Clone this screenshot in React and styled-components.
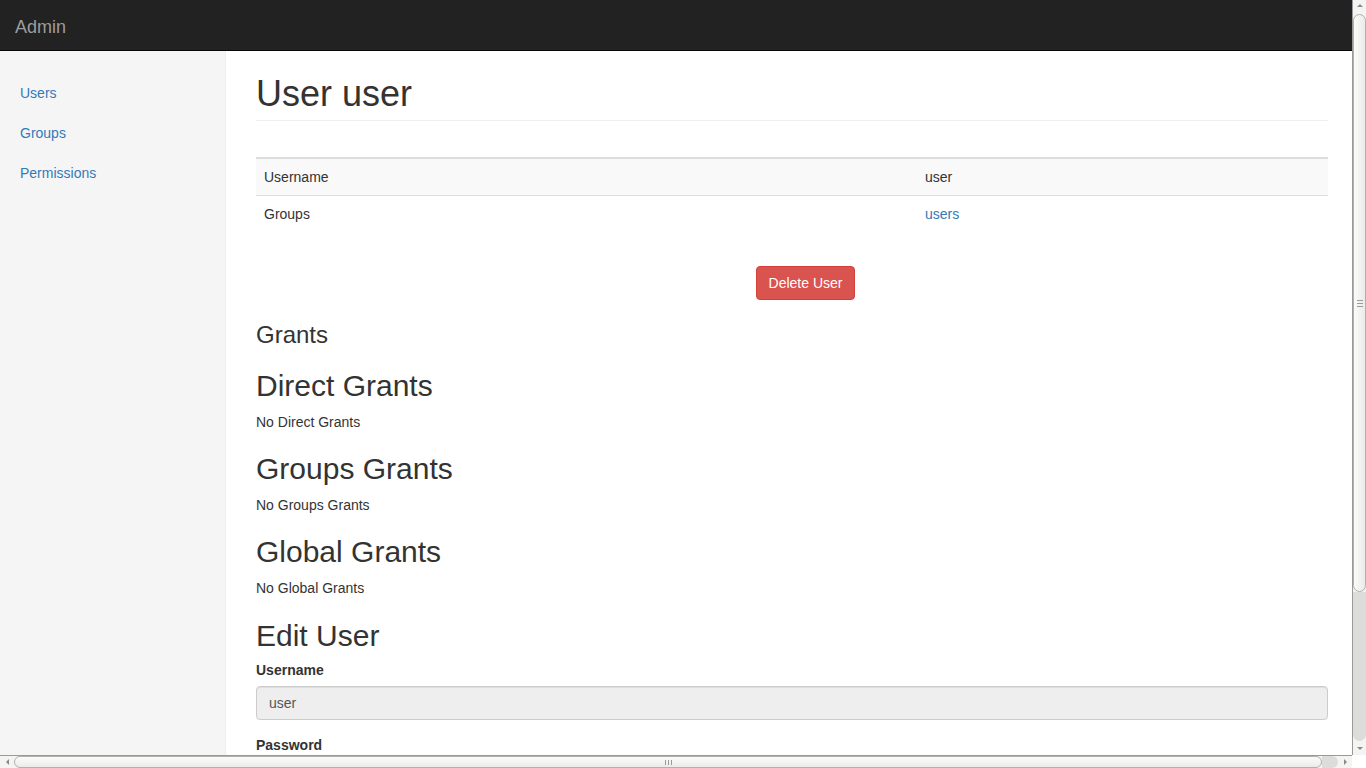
import React from "react";
import styled, { createGlobalStyle } from "styled-components";

const GlobalStyle = createGlobalStyle`
  html, body {
    margin: 0;
    padding: 0;
    overflow: hidden;
  }
  body {
    font-family: "Liberation Sans", Arial, Helvetica, sans-serif;
    font-size: 14px;
    line-height: 1.42857;
    color: #333;
    background: #fff;
  }
  * {
    box-sizing: border-box;
  }
`;

/* browser frame: page + the two scrollbars seen in the screenshot */
const Window = styled.div`
  display: grid;
  grid-template-columns: 1fr 14px;
  grid-template-rows: 1fr 13px;
  width: 100vw;
  height: 100vh;
`;

const Viewport = styled.div`
  overflow: hidden;
  display: flex;
  flex-direction: column;
`;

const VScroll = styled.div`
  display: flex;
  flex-direction: column;
  background: #f4f4f2;
  border-left: 1px solid #9a9a9a;
`;

const HScroll = styled.div`
  display: flex;
  background: #f4f4f2;
  border-top: 1px solid #9a9a9a;
`;

const Corner = styled.div`
  background: #fff;
`;

const Arrow = styled.div`
  flex: 0 0 ${(p) => p.$size || 14}px;
  display: flex;
  align-items: center;
  justify-content: center;
  background: #f4f4f2;

  &::after {
    content: "";
    width: 0;
    height: 0;
    border: 3px solid transparent;
    ${(p) => p.$dir === "up" && "border-bottom-color: #8a8a8a; border-top-width: 0; margin-bottom: 3px;"}
    ${(p) => p.$dir === "down" && "border-top-color: #8a8a8a; border-bottom-width: 0;"}
    ${(p) => p.$dir === "left" && "border-right-color: #8a8a8a; border-left-width: 0;"}
    ${(p) => p.$dir === "right" && "border-left-color: #8a8a8a; border-right-width: 0;"}
  }
`;

const Thumb = styled.div`
  flex: 0 0 ${(p) => p.$length}px;
  display: flex;
  flex-direction: ${(p) => (p.$vertical ? "column" : "row")};
  align-items: center;
  justify-content: center;
  gap: 2px;
  background: linear-gradient(
    ${(p) => (p.$vertical ? "to right" : "to bottom")},
    #fbfbfa,
    #ebebe9
  );
  border: 1px solid #b0b0ae;
  border-radius: 7px;
`;

const Grip = styled.span`
  background: #9a9a9a;
  width: ${(p) => (p.$vertical ? "6px" : "1px")};
  height: ${(p) => (p.$vertical ? "1px" : "5px")};
`;

const Trough = styled.div`
  flex: 1;
  background: #dcdcda;
  border-radius: 0 0 7px 7px;
`;

const HTrough = styled.div`
  flex: 1;
  background: #dcdcda;
  border-radius: 0 7px 7px 0;
`;

const NavBar = styled.div`
  flex: 0 0 51px;
  background: #222;
  border-bottom: 1px solid #080808;
  display: flex;
  align-items: center;
  padding: 4px 15px 0;
`;

const Brand = styled.a`
  color: #9d9d9d;
  font-size: 18px;
  line-height: 20px;
  text-decoration: none;
`;

const Body = styled.div`
  flex: 1;
  display: flex;
  min-height: 0;
`;

const Sidebar = styled.div`
  width: 226px;
  flex-shrink: 0;
  background: #f5f5f5;
  border-right: 1px solid #eee;
  padding-top: 22px;
`;

const SideLink = styled.a`
  display: block;
  padding: 10px 20px;
  color: #337ab7;
  text-decoration: none;
  font-size: 14px;
  line-height: 20px;
`;

const Main = styled.div`
  flex: 1;
  padding: 23px 24px 40px 30px;
`;

const PageHeader = styled.div`
  border-bottom: 1px solid #eee;
  padding-bottom: 6px;
  margin-bottom: 36px;
`;

const Title = styled.h1`
  margin: 0;
  font-size: 36px;
  font-weight: 500;
  line-height: 1.1;
`;

const Table = styled.table`
  width: 100%;
  border-collapse: collapse;
  border-top: 2px solid #ddd;
  margin-bottom: 34px;
`;

const Row = styled.tr`
  background: ${(p) => (p.$striped ? "#f9f9f9" : "transparent")};
  border-bottom: ${(p) => (p.$striped ? "1px solid #ddd" : "none")};
`;

const Cell = styled.td`
  padding: 8px;
  line-height: 20px;
  vertical-align: top;
  width: ${(p) => p.$width || "auto"};
`;

const Link = styled.a`
  color: #337ab7;
  text-decoration: none;
`;

const ButtonRow = styled.div`
  display: flex;
  justify-content: center;
  padding-left: 27px;
  margin-bottom: 22px;
`;

const DangerButton = styled.button`
  font-family: inherit;
  font-size: 14px;
  line-height: 20px;
  padding: 6px 12px;
  color: #fff;
  background: #d9534f;
  border: 1px solid #d43f3a;
  border-radius: 4px;
  cursor: pointer;
`;

const SectionTitle = styled.h3`
  margin: 0 0 21px;
  font-size: 24px;
  font-weight: 500;
  line-height: 1.1;
`;

const SubTitle = styled.h2`
  margin: ${(p) => p.$top}px 0 ${(p) => p.$bottom}px;
  font-size: 30px;
  font-weight: 500;
  line-height: 1.1;
`;

const Empty = styled.div`
  line-height: 20px;
`;

const FormGroup = styled.div`
  margin-bottom: 15px;
`;

const Label = styled.label`
  display: block;
  font-weight: 700;
  margin-bottom: 6px;
  line-height: 20px;
`;

const Input = styled.input`
  display: block;
  width: 100%;
  height: 34px;
  padding: 6px 12px;
  font-family: inherit;
  font-size: 14px;
  color: #555;
  background: ${(p) => (p.disabled ? "#eee" : "#fff")};
  border: 1px solid #ccc;
  border-radius: 4px;
  box-shadow: inset 0 1px 1px rgba(0, 0, 0, 0.075);
`;

const grants = [
  ["Direct Grants", "No Direct Grants"],
  ["Groups Grants", "No Groups Grants"],
  ["Global Grants", "No Global Grants"],
];

export default function App() {
  return (
    <>
      <GlobalStyle />
      <Window>
        <Viewport>
          <NavBar>
            <Brand href="#">Admin</Brand>
          </NavBar>
          <Body>
            <Sidebar>
              <SideLink href="#">Users</SideLink>
              <SideLink href="#">Groups</SideLink>
              <SideLink href="#">Permissions</SideLink>
            </Sidebar>
            <Main>
              <PageHeader>
                <Title>User user</Title>
              </PageHeader>
              <Table>
                <tbody>
                  <Row $striped>
                    <Cell $width="661px">Username</Cell>
                    <Cell>user</Cell>
                  </Row>
                  <Row>
                    <Cell>Groups</Cell>
                    <Cell>
                      <Link href="#">users</Link>
                    </Cell>
                  </Row>
                </tbody>
              </Table>
              <ButtonRow>
                <DangerButton>Delete User</DangerButton>
              </ButtonRow>
              <SectionTitle>Grants</SectionTitle>
              {grants.map(([title, text], i) => (
                <div key={title}>
                  <SubTitle $top={i === 0 ? 0 : 20} $bottom={10}>
                    {title}
                  </SubTitle>
                  <Empty>{text}</Empty>
                </div>
              ))}
              <SubTitle $top={21} $bottom={8}>
                Edit User
              </SubTitle>
              <FormGroup>
                <Label>Username</Label>
                <Input disabled value="user" readOnly />
              </FormGroup>
              <FormGroup>
                <Label>Password</Label>
                <Input type="password" />
              </FormGroup>
            </Main>
          </Body>
        </Viewport>
        <VScroll>
          <Arrow $dir="up" />
          <Thumb $vertical $length={578}>
            <Grip $vertical />
            <Grip $vertical />
            <Grip $vertical />
          </Thumb>
          <Trough />
          <Arrow $dir="down" />
        </VScroll>
        <HScroll>
          <Arrow $dir="left" />
          <Thumb $length={1308}>
            <Grip />
            <Grip />
            <Grip />
          </Thumb>
          <HTrough />
          <Arrow $dir="right" />
        </HScroll>
        <Corner />
      </Window>
    </>
  );
}
